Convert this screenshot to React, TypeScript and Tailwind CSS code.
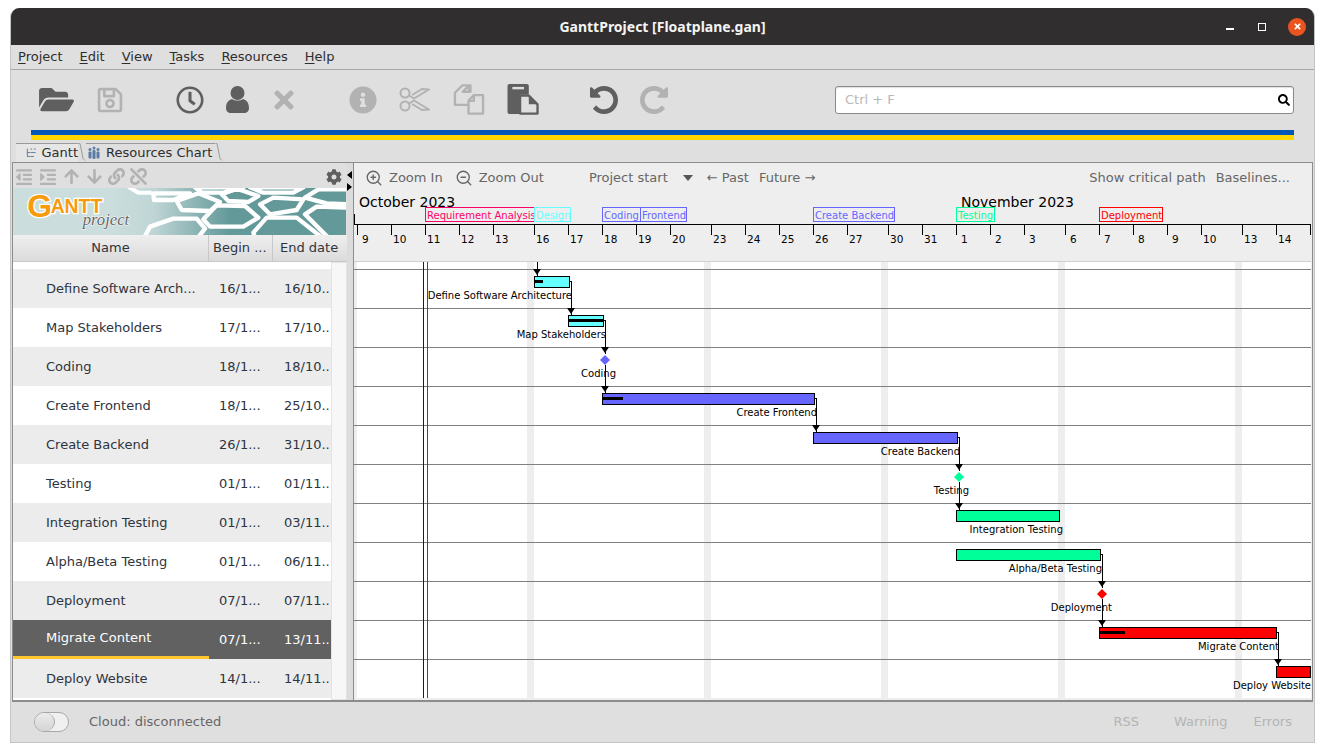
import React from 'react';
import {
  FaFolderOpen, FaRegSave, FaRegClock, FaTimes, FaInfoCircle, FaOutdent, FaIndent,
  FaArrowUp, FaArrowDown, FaLink, FaUnlink, FaCog, FaSearch,
} from 'react-icons/fa';
import { ZoomIn, ZoomOut } from 'lucide-react';

const dejavu = "font-['DejaVu_Sans',sans-serif]";
const DARK = '#5f5f5f';
const OFF = '#b2b2b2';

const menus = ['Project', 'Edit', 'View', 'Tasks', 'Resources', 'Help'];

const tasks = [
  { name: 'Define Software Arch...', begin: '16/1...', end: '16/10..' },
  { name: 'Map Stakeholders', begin: '17/1...', end: '17/10..' },
  { name: 'Coding', begin: '18/1...', end: '18/10..' },
  { name: 'Create Frontend', begin: '18/1...', end: '25/10..' },
  { name: 'Create Backend', begin: '26/1...', end: '31/10..' },
  { name: 'Testing', begin: '01/1...', end: '01/11..' },
  { name: 'Integration Testing', begin: '01/1...', end: '03/11..' },
  { name: 'Alpha/Beta Testing', begin: '01/1...', end: '06/11..' },
  { name: 'Deployment', begin: '07/1...', end: '07/11..' },
  { name: 'Migrate Content', begin: '07/1...', end: '13/11..' },
  { name: 'Deploy Website', begin: '14/1...', end: '14/11..' },
];

// x of the tick on the left of each day cell
const days: [string, number][] = [
  ['9', 356], ['10', 390], ['11', 424], ['12', 458], ['13', 492], ['16', 533], ['17', 567], ['18', 601],
  ['19', 635], ['20', 669], ['23', 710], ['24', 744], ['25', 778], ['26', 812], ['27', 846], ['30', 887],
  ['31', 921], ['1', 955], ['2', 989], ['3', 1023], ['6', 1064], ['7', 1098], ['8', 1132], ['9', 1166],
  ['10', 1200], ['13', 1241], ['14', 1275],
];

const weekends = [349, 526, 703, 880, 1057, 1234];
const rowLines = [269, 308, 347, 386, 425, 464, 503, 542, 581, 620, 659];

const headerTags = [
  { label: 'Requirement Analysis', x: 424, w: 109, color: '#ff0066' },
  { label: 'Design', x: 533, w: 36, color: '#66ffff' },
  { label: 'Coding', x: 601, w: 38, color: '#6666ff' },
  { label: 'Frontend', x: 639, w: 46, color: '#6666ff' },
  { label: 'Create Backend', x: 812, w: 81, color: '#6666ff' },
  { label: 'Testing', x: 955, w: 38, color: '#00ff99' },
  { label: 'Deployment', x: 1098, w: 63, color: '#ff0000' },
];

const bars = [
  { x: 533, w: 35, y: 276, color: '#66ffff', prog: 8, label: 'Define Software Architecture', lx: 571 },
  { x: 567, w: 35, y: 315, color: '#66ffff', prog: 35, label: 'Map Stakeholders', lx: 605 },
  { x: 601, w: 212, y: 393, color: '#6666ff', prog: 20, label: 'Create Frontend', lx: 816 },
  { x: 812, w: 144, y: 432, color: '#6666ff', prog: 0, label: 'Create Backend', lx: 959 },
  { x: 955, w: 103, y: 510, color: '#00ff99', prog: 0, label: 'Integration Testing', lx: 1062 },
  { x: 955, w: 144, y: 549, color: '#00ff99', prog: 0, label: 'Alpha/Beta Testing', lx: 1101 },
  { x: 1098, w: 177, y: 627, color: '#ff0000', prog: 25, label: 'Migrate Content', lx: 1278 },
  { x: 1275, w: 34, y: 666, color: '#ff0000', prog: 0, label: 'Deploy Website', lx: 1310 },
];

const milestones = [
  { x: 604, y: 360, color: '#6666ff', label: 'Coding', lx: 615 },
  { x: 958, y: 477, color: '#00ff99', label: 'Testing', lx: 968 },
  { x: 1101, y: 594, color: '#ff0000', label: 'Deployment', lx: 1111 },
];

// dependency lines, with the arrow head at the last point
const links = [
  '536,262 536,276',
  '568,281 570,281 570,315',
  '602,320 604,320 604,354',
  '604,365 604,393',
  '813,398 815,398 815,432',
  '956,437 958,437 958,471',
  '958,482 958,510',
  '1099,554 1101,554 1101,588',
  '1101,599 1101,627',
  '1275,632 1277,632 1277,666',
];

function Timeline() {
  return (
    <svg viewBox="353 190 957 508" className="block w-[957px] h-[508px]" fontFamily="'DejaVu Sans', sans-serif">
      <rect x="353" y="190" width="957" height="72" fill="#eeeeee" />
      <rect x="353" y="262" width="957" height="436" fill="#ffffff" />
      <line x1="353" x2="1310" y1="261.5" y2="261.5" stroke="#cfcfcf" />
      {weekends.map((x) => (
        <rect key={x} x={Math.max(x, 353)} y="262" width={x < 353 ? 3 : 7} height="436" fill="#eeeeee" />
      ))}
      <text x="358" y="207" fontSize="14" fill="#000">October 2023</text>
      <text x="960" y="207" fontSize="14" fill="#000">November 2023</text>
      {headerTags.map((t) => (
        <g key={t.label}>
          <rect x={t.x + 0.5} y="207.5" width={t.w} height="14" fill="#eeeeee" stroke={t.color} shapeRendering="crispEdges" />
          <text x={t.x + 2} y="219" fontSize="10" fill={t.color}>{t.label}</text>
        </g>
      ))}
      <g shapeRendering="crispEdges" stroke="#000">
        <line x1="353" x2="1310" y1="224.5" y2="224.5" />
        <line x1="353.5" x2="353.5" y1="214" y2="224" />
        <line x1="1309.5" x2="1309.5" y1="224" y2="235" />
        {days.map(([, x], i) => (
          <line key={i} x1={x + 0.5} x2={x + 0.5} y1="224" y2="235" />
        ))}
      </g>
      {days.map(([d, x], i) => (
        <text key={i} x={x + 2 + (i === 0 ? 0 : 0) + (d.length === 1 ? 3 : 0)} y="243" fontSize="10.5" fill="#000">{d}</text>
      ))}
      <g shapeRendering="crispEdges">
        {rowLines.map((y) => (
          <line key={y} x1="353" x2="1310" y1={y + 0.5} y2={y + 0.5} stroke="#808080" />
        ))}
        <line x1="422.5" x2="422.5" y1="262" y2="698" stroke="#0000ff" />
        <line x1="426.5" x2="426.5" y1="262" y2="698" stroke="#ff0000" />
      </g>
      {links.map((pts) => {
        const p = pts.split(' ');
        const [ax, ay] = p[p.length - 1].split(',').map(Number);
        return (
          <g key={pts}>
            <polyline points={pts} fill="none" stroke="#000" shapeRendering="crispEdges" />
            <polygon points={`${ax - 4},${ay - 7} ${ax + 4},${ay - 7} ${ax},${ay - 1}`} fill="#000" />
          </g>
        );
      })}
      {bars.map((b) => (
        <g key={b.label}>
          <rect x={b.x + 0.5} y={b.y + 0.5} width={b.w} height="11" fill={b.color} stroke="#000" shapeRendering="crispEdges" />
          {b.prog > 0 && <rect x={b.x + 1} y={b.y + 4} width={b.prog} height="3" fill="#000" shapeRendering="crispEdges" />}
          <text x={b.lx} y={b.y + 23} textAnchor="end" fontSize="10" fill="#000">{b.label}</text>
        </g>
      ))}
      {milestones.map((m) => (
        <g key={m.label}>
          <polygon points={`${m.x - 5},${m.y} ${m.x},${m.y - 5} ${m.x + 5},${m.y} ${m.x},${m.y + 5}`} fill={m.color} />
          <text x={m.lx} y={m.y + 17} textAnchor="end" fontSize="10" fill="#000">{m.label}</text>
        </g>
      ))}
    </svg>
  );
}

function Banner() {
  const cells = [
    '430,22 540,22 490,42 432,42',
    '500,45 565,22 630,48 600,75 515,72',
    '555,4 700,4 640,20 575,20',
    '635,25 680,8 745,30 715,48 655,45',
    '720,4 880,4 850,20 760,20',
    '750,55 790,35 880,40 860,72 780,85',
    '580,100 620,58 705,60 745,95 700,122 600,122',
    '420,122 490,98 560,98 585,128 560,160 400,160',
    '885,35 925,10 1020,10 1020,55 950,52',
    '885,85 920,62 1020,65 1020,160 960,160',
    '730,140 770,95 860,95 930,150 900,170 740,170',
  ];
  return (
    <svg viewBox="9 6 999 141" className="block w-[333px] h-[47px]" preserveAspectRatio="none">
      <defs>
        <linearGradient id="teal" x1="0" x2="1" y1="0" y2="0">
          <stop offset="0.3" stopColor="#cbdddd" />
          <stop offset="0.42" stopColor="#c0d6d6" />
          <stop offset="0.65" stopColor="#649999" />
          <stop offset="1" stopColor="#649999" />
        </linearGradient>
      </defs>
      <rect x="9" y="6" width="999" height="141" fill="url(#teal)" />
      <polyline points="355,2 385,20 425,20" fill="none" stroke="#fff" strokeWidth="12" />
      {cells.map((c) => (
        <polygon key={c} points={c} fill="none" stroke="#fff" strokeWidth="13" strokeLinejoin="round" />
      ))}
      <g fontFamily="'Liberation Sans', sans-serif" fontWeight="700" fill="#f79a0c" stroke="#fff" strokeWidth="8" style={{ paintOrder: 'stroke' }}>
        <text x="52" y="92" fontSize="96">G</text>
        <text x="122" y="81" fontSize="58">ANTT</text>
      </g>
      <text x="218" y="118" fontFamily="'Liberation Serif', serif" fontStyle="italic" fontSize="50" fill="#666" stroke="#fff" strokeWidth="3" style={{ paintOrder: 'stroke' }}>project</text>
    </svg>
  );
}

function UserIcon({ color }: { color: string }) {
  return (
    <svg viewBox="0 0 23 27" className="w-[23px] h-[27px]" fill={color}>
      <circle cx="11.5" cy="7" r="7" />
      <path d="M0 22c0-6 3-8 6-9 3 2 8 2 11 0 3 1 6 3 6 9 0 3-2 5-5 5H5c-3 0-5-2-5-5z" />
    </svg>
  );
}

function ScissorsIcon({ color }: { color: string }) {
  return (
    <svg viewBox="0 0 32 25" className="w-[32px] h-[25px]" fill="none" stroke={color} strokeWidth="2">
      <circle cx="6" cy="6" r="4.5" />
      <circle cx="6" cy="19" r="4.5" />
      <path d="M10 8.5l5 3L30 2.5 23 2 13 8M10 16.5l5-3 15 9-7 .5-10-6" strokeLinejoin="round" />
    </svg>
  );
}

function CopyIcon({ color }: { color: string }) {
  return (
    <svg viewBox="0 0 32 32" className="w-[32px] h-[31px]" fill="none" stroke={color} strokeWidth="2.4" strokeLinejoin="round">
      <path d="M11 1.5h5v6.5h-6.5l6.5-6.5h1.5V9M15 21.5H1.5V9L9 1.5h2" />
      <path d="M20.5 11.5h10v19h-15V17l5.500-5.500v6h-5.500" />
    </svg>
  );
}

function PasteIcon({ color }: { color: string }) {
  return (
    <svg viewBox="0 0 32 32" className="w-[32px] h-[31px]">
      <path d="M2 0h18a2 2 0 0 1 2 2v9H13v20H2a2 2 0 0 1-2-2V2a2 2 0 0 1 2-2z" fill={color} />
      <rect x="5" y="3" width="12" height="2.500" fill="#dfdfdf" />
      <path d="M13 12h9l9 9v9.500H13z" fill="none" stroke={color} strokeWidth="2.400" strokeLinejoin="round" />
      <path d="M22 12v9h9z" fill={color} />
    </svg>
  );
}

function UndoIcon({ color, flip }: { color: string; flip?: boolean }) {
  return (
    <svg viewBox="0 0 1536 1536" className={flip ? 'w-[28px] h-[28px] -scale-x-100' : 'w-[28px] h-[28px]'} fill={color}>
      <path d="M1536 768q0 156-61 298t-164 245-245 164-298 61q-172 0-327-72.500t-264-204.500q-7-10-6.500-22.500t8.500-20.500l137-138q10-9 25-9 16 2 23 12 73 95 179 147t225 52q104 0 198.500-40.500t163.500-109.500 109.500-163.500 40.500-198.500-40.500-198.500-109.500-163.500-163.500-109.500-198.500-40.500q-98 0-188 35.500t-160 101.500l137 138q31 30 14 69-17 40-59 40H64q-26 0-45-19t-19-45V128q0-42 40-59 39-17 69 14l130 129q107-101 244.500-156.500T768 0q156 0 298 61t245 164 164 245 61 298z" />
    </svg>
  );
}

function TabEdge() {
  return (
    <svg viewBox="0 0 8 18" className="w-[8px] h-[18px] shrink-0" fill="none" stroke="#9a9a9a">
      <path d="M0.500 0.500h1.500l3 15 2 2" />
    </svg>
  );
}

export default function App() {
  return (
    <div className={`w-[1324px] h-[752px] bg-white pt-2 pl-[10px] overflow-hidden ${dejavu}`}>
      <div className="w-[1305px] h-[735px] flex flex-col bg-[#dfdfdf] rounded-t-[9px] overflow-hidden border-x border-b border-[#c4c4c4]">
        {/* title bar */}
        <div className="h-[37px] shrink-0 bg-[#302e2e] grid grid-cols-[1fr_auto_1fr] items-center">
          <div />
          <div className="font-['Noto_Sans',sans-serif] font-bold text-[14px] text-[#f4f4f4]">GanttProject [Floatplane.gan]</div>
          <div className="flex justify-end items-center pr-2">
            <div className="w-[8px] h-[2px] bg-white mt-[5px] mr-[24px]" />
            <div className="w-[8px] h-[8px] border border-white mr-[22px]" />
            <div className="w-[18px] h-[18px] rounded-full bg-[#e95420] flex items-center justify-center">
              <FaTimes className="text-white w-[9px] h-[9px]" />
            </div>
          </div>
        </div>

        {/* menu */}
        <div className="h-[25px] shrink-0 flex items-center gap-[17px] pl-[7px] border-b border-[#a9a9a9] text-[13px] text-[#2e2e2e]">
          {menus.map((m) => (
            <span key={m}><span className="underline underline-offset-2">{m[0]}</span>{m.slice(1)}</span>
          ))}
        </div>

        {/* toolbar */}
        <div className="h-[60px] shrink-0 flex items-center pl-[28px] pr-[20px] pb-[1px]">
          <FaFolderOpen color={DARK} className="w-[35px] h-[31px]" />
          <FaRegSave color={OFF} className="w-[28px] h-[28px] ml-[22px]" />
          <FaRegClock color={DARK} className="w-[28px] h-[28px] ml-[52px]" />
          <div className="ml-[22px] flex"><UserIcon color={DARK} /></div>
          <FaTimes color={OFF} className="w-[24px] h-[28px] ml-[23px]" />
          <FaInfoCircle color={OFF} className="w-[28px] h-[28px] ml-[53px]" />
          <div className="ml-[22px] flex"><ScissorsIcon color={OFF} /></div>
          <div className="ml-[22px] flex"><CopyIcon color={OFF} /></div>
          <div className="ml-[22px] flex"><PasteIcon color={DARK} /></div>
          <div className="ml-[51px] flex"><UndoIcon color={DARK} /></div>
          <div className="ml-[22px] flex"><UndoIcon color={OFF} flip /></div>
          <div className="ml-auto w-[459px] h-[28px] bg-white border border-[#8a8a8a] rounded-[3px] flex items-center justify-between pl-[9px] pr-[3px] shadow-[inset_0_1px_1px_#ddd]">
            <span className="text-[13px] text-[#b8b8b8]">Ctrl + F</span>
            <FaSearch className="w-[12px] h-[12px] text-black" />
          </div>
        </div>

        {/* ukrainian strip */}
        <div className="mx-[20px] shrink-0 h-[10px] flex flex-col">
          <div className="h-[5px] bg-[#0057b7]" />
          <div className="h-[5px] bg-[#ffd700]" />
        </div>

        {/* tabs */}
        <div className="h-[19px] mt-[3px] shrink-0 flex items-stretch pl-[5px] text-[13px] text-[#2e2e2e]">
          <div className="flex items-center pl-[10px] gap-[5px] border-t border-[#9a9a9a] w-[62px] bg-[#e6e6e6]">
            <svg viewBox="0 0 12 12" className="w-[12px] h-[12px]" fill="none" stroke="#56708f">
              <path d="M1.500 1v9h3M1.500 5.500h3M5 1.500h2M5 5.500h6M5 10h4M9 1.500h2" />
            </svg>
            Gantt
          </div>
          <TabEdge />
          <div className="flex items-center pl-[1px] gap-[5px] border-t border-[#9a9a9a] w-[129px]">
            <svg viewBox="0 0 14 14" className="w-[14px] h-[14px]" fill="#5c7da3">
              <circle cx="3" cy="3.500" r="1.500" /><rect x="1.500" y="5.500" width="3" height="7" rx="1" />
              <circle cx="7" cy="2" r="1.500" /><rect x="5.500" y="4" width="3" height="9" rx="1" />
              <circle cx="11" cy="3.500" r="1.500" /><rect x="9.500" y="5.500" width="3" height="7" rx="1" />
            </svg>
            Resources Chart
          </div>
          <TabEdge />
        </div>

        {/* main panes */}
        <div className="h-[540px] shrink-0 ml-[1px] mr-[1px] border border-[#8c8c8c] border-b-2 flex bg-[#e0e0e0]">
          <div className="w-[334px] shrink-0 flex flex-col">
            <div className="h-[25px] pt-[2px] flex items-center pl-[2px] pr-[5px] gap-[5px] bg-[#dfdfdf]">
              <FaOutdent color={OFF} className="w-[18px] h-[18px]" />
              <FaIndent color={OFF} className="w-[18px] h-[18px] ml-[1px]" />
              <FaArrowUp color={OFF} className="w-[17px] h-[17px] ml-[1px]" />
              <FaArrowDown color={OFF} className="w-[17px] h-[17px] ml-[1px]" />
              <FaLink color={OFF} className="w-[17px] h-[17px]" />
              <FaUnlink color={OFF} className="w-[17px] h-[17px]" />
              <FaCog color={DARK} className="w-[16px] h-[16px] ml-auto" />
            </div>
            <Banner />
            <div className="h-[27px] flex text-[13px] text-[#2e3440] bg-gradient-to-b from-[#efefef] to-[#dbdbdb] border-b border-[#c8c8c8]">
              <div className="w-[196px] flex items-center justify-center border-r border-[#c8c8c8]">Name</div>
              <div className="w-[64px] flex items-center pl-[4px] border-r border-[#c8c8c8]">Begin ...</div>
              <div className="flex-1 flex items-center pl-[7px]">End date</div>
            </div>
            <div className="flex-1 flex bg-white text-[13px] text-[#2e3440]">
              <div className="w-[318px] pt-[7px]">
                {tasks.map((t, i) => {
                  const selected = t.name === 'Migrate Content';
                  const stripe = selected ? 'bg-[#616161] text-white' : i % 2 === 0 || t.name === 'Deploy Website' ? 'bg-[#ececec]' : 'bg-white';
                  return (
                    <div key={t.name} className={`h-[39px] flex ${stripe}`}>
                      <div className={`w-[196px] pl-[33px] flex items-center ${selected ? 'border-b-[3px] border-[#fdc52b]' : ''}`}>{t.name}</div>
                      <div className="w-[65px] pl-[10px] flex items-center">{t.begin}</div>
                      <div className="flex-1 pl-[10px] flex items-center whitespace-nowrap overflow-hidden">{t.end}</div>
                    </div>
                  );
                })}
              </div>
              <div className="flex-1 bg-[#f7f7f7] border border-[#e4e4e4]" />
            </div>
          </div>

          {/* splitter */}
          <div className="relative w-[6px] shrink-0 bg-[#dcdcdc]">
            <svg viewBox="0 0 6 20" className="absolute left-0 top-[8px] w-[6px] h-[20px]" fill="#000">
              <path d="M0 4l5-4v8zM0 12l5 4-5 4z" />
            </svg>
          </div>

          {/* chart pane */}
          <div className="flex-1 min-w-0 flex flex-col border-l border-[#8c8c8c] bg-[#eeeeee]">
            <div className="h-[27px] pt-[2px] flex items-center text-[13px] text-[#666] whitespace-nowrap">
              <ZoomIn className="w-[18px] h-[18px] ml-[11px]" strokeWidth={1.800} />
              <span className="ml-[6px]">Zoom In</span>
              <ZoomOut className="w-[18px] h-[18px] ml-[12px]" strokeWidth={1.800} />
              <span className="ml-[6px]">Zoom Out</span>
              <span className="ml-[45px]">Project start</span>
              <svg viewBox="0 0 10 6" className="w-[10px] h-[6px] ml-[15px]" fill="#555"><path d="M0 0h10L5 6z" /></svg>
              <span className="ml-[14px]">← Past</span>
              <span className="ml-[10px]">Future →</span>
              <span className="ml-auto">Show critical path</span>
              <span className="ml-[10px] mr-[22px]">Baselines...</span>
            </div>
            <Timeline />
          </div>
        </div>

        {/* status bar */}
        <div className="flex-1 flex items-center pl-[23px] pr-[22px] text-[13px]">
          <div className="w-[35px] h-[20px] rounded-full border border-[#a8a8a8] bg-[#f0f0f0] flex">
            <div className="w-[20px] h-[18px] rounded-full border-r border-[#a8a8a8] bg-gradient-to-b from-[#ececec] to-[#d4d4d4]" />
          </div>
          <span className="ml-[20px] text-[#666]">Cloud: disconnected</span>
          <span className="ml-auto text-[#b4b4b4]">RSS</span>
          <span className="ml-[35px] text-[#b4b4b4]">Warning</span>
          <span className="ml-[26px] text-[#b4b4b4]">Errors</span>
        </div>
      </div>
    </div>
  );
}
